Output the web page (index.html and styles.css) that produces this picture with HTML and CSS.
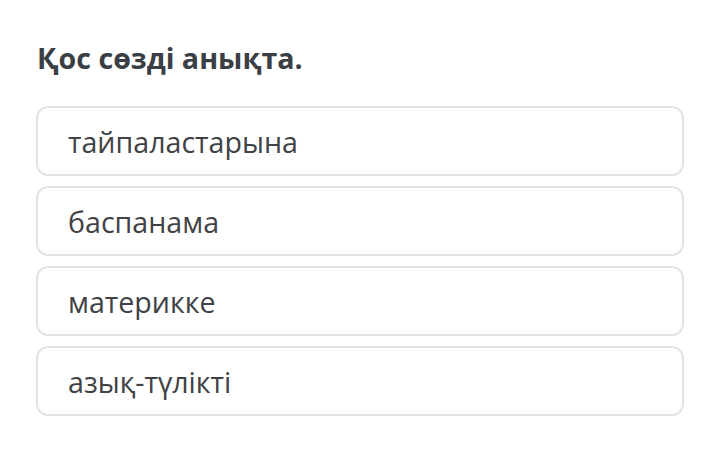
FILE: index.html
```html
<!DOCTYPE html>
<html>
<head>
<meta charset="utf-8">
<link rel="stylesheet" href="styles.css">
</head>
<body>
<div class="quiz">
  <h1 class="question">Қос сөзді анықта.</h1>
  <div class="options">
    <div class="option">тайпаластарына</div>
    <div class="option">баспанама</div>
    <div class="option">материкке</div>
    <div class="option">азық-түлікті</div>
  </div>
</div>
</body>
</html>
```
FILE: styles.css
```css
html, body {
  margin: 0;
  padding: 0;
  background: #ffffff;
}
.quiz {
  font-family: "Open Sans", "Noto Sans", sans-serif;
  padding: 38px 36px 0 36px;
  width: 648px;
}
.question {
  margin: 0 0 28px 1px;
  font-size: 28.6px;
  font-weight: 700;
  line-height: 40px;
  color: #3a3e45;
}
.options {
  display: flex;
  flex-direction: column;
  gap: 10px;
}
.option {
  box-sizing: border-box;
  height: 70px;
  border: 2px solid #e3e3e3;
  border-radius: 12px;
  padding: 0 30px;
  display: flex;
  align-items: center;
  font-size: 28.6px;
  color: #404246;
}
```
